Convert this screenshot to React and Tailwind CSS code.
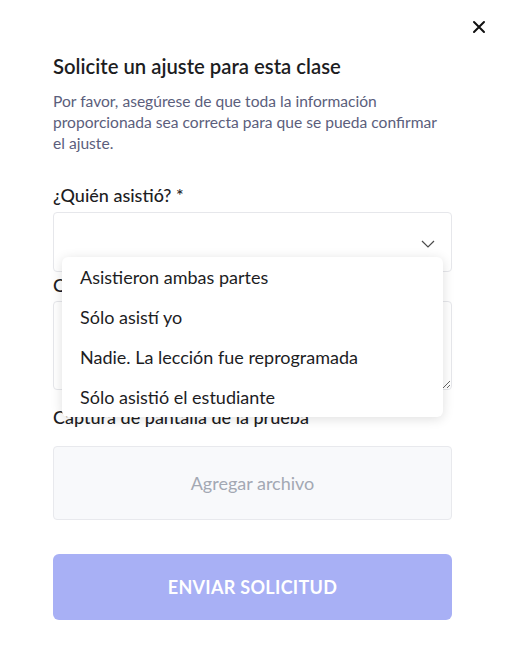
import { useState } from "react";

const options = [
  "Asistieron ambas partes",
  "Sólo asistí yo",
  "Nadie. La lección fue reprogramada",
  "Sólo asistió el estudiante",
];

export default function App() {
  const [open] = useState(true);

  return (
    <div className="w-[505px] h-[671px] bg-white font-['Lato','Noto_Sans',sans-serif] text-[#1d1d1f]">
      <div className="flex justify-end pt-[20px] pr-[19px]">
        <button className="w-[14px] h-[14px] flex items-center justify-center">
          <svg width="14" height="14" viewBox="0 0 14 14" fill="none">
            <path d="M2 2L12 12M12 2L2 12" stroke="#111" strokeWidth="2" strokeLinecap="round" />
          </svg>
        </button>
      </div>

      <div className="px-[53px]">
        <h2 className="mt-[18px] text-[20.3px] leading-[28px] font-semibold">
          Solicite un ajuste para esta clase
        </h2>
        <p className="mt-[11px] text-[15.6px] leading-[21px] text-[#5b5e7c]">
          Por favor, asegúrese de que toda la información proporcionada sea correcta para que se pueda confirmar el ajuste.
        </p>

        {/* select */}
        <label className="block mt-[29px] text-[18px] leading-[24px] font-medium">
          ¿Quién asistió? *
        </label>
        <div className="relative mt-[5px]">
          <div className="h-[60px] border border-[#e6e7eb] rounded-[4px] flex items-center justify-end pr-[16px]">
            <svg width="14" height="8" viewBox="0 0 14 8" fill="none" className="mt-[4px]">
              <path d="M1 1L7 7L13 1" stroke="#4b4b4b" strokeWidth="1.2" />
            </svg>
          </div>
          {open && (
            <ul className="absolute z-10 top-[45px] left-[9px] w-[381px] bg-white rounded-[6px] shadow-[0_2px_12px_rgba(0,0,0,0.13)]">
              {options.map((o) => (
                <li key={o} className="h-[40px] flex items-center pl-[18px] text-[18px] text-[#1d1d1f]">
                  {o}
                </li>
              ))}
            </ul>
          )}
        </div>

        {/* comments */}
        <label className="block mt-[1px] text-[18px] leading-[24px] font-medium">
          Comentarios *
        </label>
        <textarea className="block mt-[4px] w-full h-[89px] border border-[#e6e7eb] rounded-[4px] outline-none" />

        {/* file */}
        <label className="block mt-[15px] text-[18px] leading-[24px] font-medium">
          Captura de pantalla de la prueba *
        </label>
        <div className="mt-[17px] h-[74px] bg-[#f8f9fb] border border-[#e8e9ed] rounded-[4px] flex items-center justify-center text-[18px] text-[#a3a8b3]">
          Agregar archivo
        </div>

        <button className="mt-[34px] w-full h-[66px] rounded-[6px] bg-[#a8b0f5] text-white text-[18px] font-bold tracking-[0.3px]">
          ENVIAR SOLICITUD
        </button>
      </div>
    </div>
  );
}
